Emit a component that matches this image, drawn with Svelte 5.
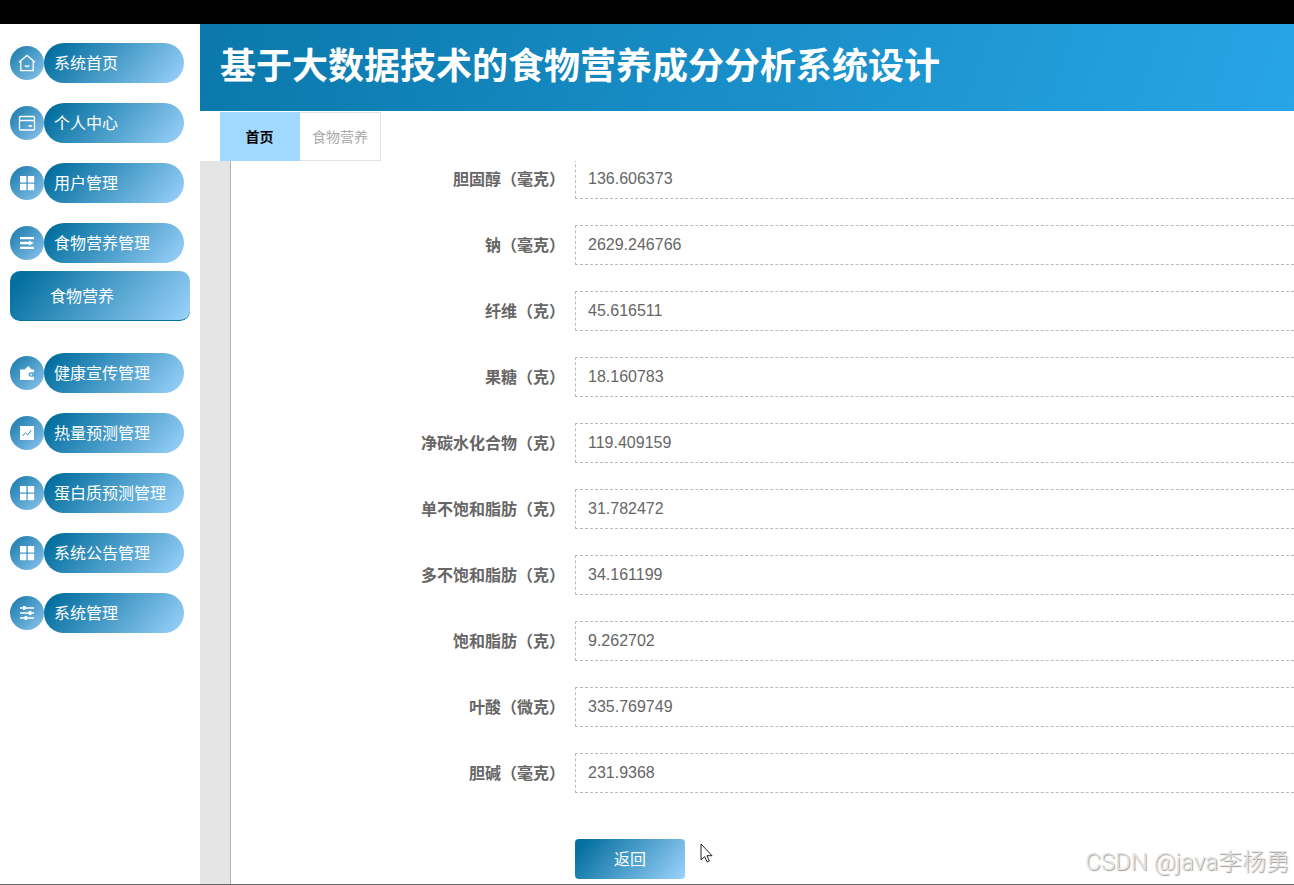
<script lang="ts">
    let openMenu = "食物营养管理";
    let activeTab = "首页";

    const menus = [
        { name: "系统首页", icon: "home" },
        { name: "个人中心", icon: "card" },
        { name: "用户管理", icon: "grid" },
        { name: "食物营养管理", icon: "indent", children: ["食物营养"] },
        { name: "健康宣传管理", icon: "wallet" },
        { name: "热量预测管理", icon: "chart" },
        { name: "蛋白质预测管理", icon: "grid" },
        { name: "系统公告管理", icon: "grid" },
        { name: "系统管理", icon: "sliders" },
    ];

    const tabs = ["首页", "食物营养"];

    const fields = [
        { id: "danguchun", label: "胆固醇（毫克）", value: "136.606373" },
        { id: "na", label: "钠（毫克）", value: "2629.246766" },
        { id: "xianwei", label: "纤维（克）", value: "45.616511" },
        { id: "guotang", label: "果糖（克）", value: "18.160783" },
        { id: "jingtanshui", label: "净碳水化合物（克）", value: "119.409159" },
        { id: "danbubaohe", label: "单不饱和脂肪（克）", value: "31.782472" },
        { id: "duobubaohe", label: "多不饱和脂肪（克）", value: "34.161199" },
        { id: "baohe", label: "饱和脂肪（克）", value: "9.262702" },
        { id: "yesuan", label: "叶酸（微克）", value: "335.769749" },
        { id: "danjian", label: "胆碱（毫克）", value: "231.9368" },
    ];

    function toggle(name: string) {
        openMenu = name;
    }
</script>

<div class="page">
    <div class="topbar"></div>
    <div class="body">
        <nav class="sidebar">
            <ul>
                {#each menus as item}
                    <li>
                        <button class="menu" type="button" on:click={() => toggle(item.name)}>
                            <span class="circle">
                                <svg viewBox="0 0 18 18" width="18" height="18" aria-hidden="true">
                                    {#if item.icon === "home"}
                                        <path class="line" d="M1 8.2 9 1.4l8 6.8M2.8 7v9.6h12.4V7M6.8 11.6q2.2 2 4.4 0" />
                                    {:else if item.icon === "card"}
                                        <rect class="line" x="1.5" y="2.5" width="15" height="13.5" rx="1" />
                                        <path class="line" d="M1.5 6.5h15M10.5 12h3.5" />
                                    {:else if item.icon === "grid"}
                                        <rect x="2" y="2" width="6.4" height="6.4" rx="0.6" />
                                        <rect x="9.8" y="2" width="6.4" height="6.4" rx="0.6" />
                                        <rect x="2" y="9.8" width="6.4" height="6.4" rx="0.6" />
                                        <rect x="9.8" y="9.8" width="6.4" height="6.4" rx="0.6" />
                                    {:else if item.icon === "indent"}
                                        <path d="M2 3h14v2.2H2zM2 7.8h9V6.4L15.8 9 11 11.6v-1.4H2zM2 12.8h14V15H2z" />
                                    {:else if item.icon === "wallet"}
                                        <path d="M2 5.5h4.5L10.5 2l3 3.5H16v2.8h-3.3a2.2 2.2 0 0 0 0 4.4H16V16H2z" />
                                        <circle cx="13.2" cy="10.5" r="1" />
                                    {:else if item.icon === "chart"}
                                        <path d="M2 2h14v14H2z" />
                                        <path class="trend" d="M4.5 12 7.4 8.8l2.4 2 3.6-4.6" />
                                    {:else}
                                        <path d="M2 3.2h14v1.6H2zM2 8.2h14v1.6H2zM2 13.2h14v1.6H2z" />
                                        <path d="M5 2h2.6v4H5zM10.8 7h2.6v4h-2.6zM6.5 12h2.6v4H6.5z" />
                                    {/if}
                                </svg>
                            </span>
                            <span class="pill">{item.name}</span>
                        </button>
                        {#if item.children && openMenu === item.name}
                            <div class="submenu">
                                {#each item.children as child}
                                    <a href="#{child}">{child}</a>
                                {/each}
                            </div>
                        {/if}
                    </li>
                {/each}
            </ul>
        </nav>

        <div class="main">
            <header>
                <h1>基于大数据技术的食物营养成分分析系统设计</h1>
            </header>
            <div class="tabs">
                {#each tabs as tab}
                    <button type="button" class="tab" class:active={activeTab === tab} on:click={() => (activeTab = tab)}>{tab}</button>
                {/each}
            </div>
            <div class="view">
                <form>
                    {#each fields as field}
                        <div class="row">
                            <label for={field.id}>{field.label}</label>
                            <input id={field.id} type="text" readonly value={field.value} />
                        </div>
                    {/each}
                    <div class="actions">
                        <button type="button" class="back">返回</button>
                    </div>
                </form>
            </div>
        </div>
    </div>

    <svg class="pointer" viewBox="0 0 13 20" width="13" height="20" aria-hidden="true">
        <path d="M1 1v16l3.6-3.4 2.6 5.4 2.2-1-2.5-5.3H12z" />
    </svg>
    <div class="watermark">CSDN @java李杨勇</div>
</div>

<style>
:global(body) {
    margin: 0;
    background: #fff;
}

.page {
    position: relative;
    display: flex;
    flex-direction: column;
    box-sizing: border-box;
    min-height: 100vh;
    border-bottom: 1px solid #666;
    overflow: hidden;
    font-family: "Liberation Sans", "Noto Sans CJK SC", sans-serif;
    font-size: 16px;
}

.page button {
    font-family: inherit;
    border: 0;
    cursor: pointer;
}

.topbar {
    height: 24px;
    background: #000;
}

.body {
    display: flex;
    flex: 1;
}

.sidebar {
    flex: 0 0 200px;
}

.sidebar ul {
    display: flex;
    flex-direction: column;
    gap: 20px;
    list-style: none;
    margin: 0;
    padding: 19px 10px;
}

.menu {
    display: flex;
    align-items: center;
    width: 174px;
    padding: 0;
    background: none;
    color: #fff;
    font-size: 16px;
    text-align: left;
}

.pill,
.submenu a,
.back {
    background: linear-gradient(130deg, #0570a0 8%, #98d0f9 98%);
}

.circle {
    display: flex;
    align-items: center;
    justify-content: center;
    width: 34px;
    height: 34px;
    border-radius: 50%;
    background: linear-gradient(135deg, #1577a8, #8cc6ef);
}

.circle svg {
    fill: #fff;
}

.circle .line {
    fill: none;
    stroke: #fff;
    stroke-width: 1.3;
}

.circle .trend {
    fill: none;
    stroke: #3c8fbf;
    stroke-width: 1;
}

.pill {
    flex: 1;
    padding: 2px 0 0 10px;
    border-radius: 20px;
    line-height: 38px;
}

.submenu {
    padding: 8px 0 12px;
}

.submenu a {
    display: block;
    box-sizing: border-box;
    height: 50px;
    padding-left: 40px;
    border-bottom: 1px solid #0570a0;
    border-radius: 10px;
    color: #fff;
    line-height: 52px;
    text-decoration: none;
}

.main {
    display: flex;
    flex-direction: column;
    flex: 1;
    min-width: 0;
}

header {
    box-sizing: border-box;
    height: 87px;
    padding: 16px 20px;
    background: linear-gradient(110deg, #0a78aa, #28a5e6);
}

h1 {
    margin: 0;
    color: #fff;
    font-size: 36px;
    font-weight: 700;
    line-height: 54px;
    white-space: nowrap;
}

.tabs {
    display: flex;
    padding: 1px 20px 0;
}

.tab {
    box-sizing: border-box;
    min-width: 80px;
    height: 49px;
    padding: 0 12px 2px;
    background: #fff;
    color: #aaa;
    font-size: 14px;
}

.page .tab {
    border: 1px solid #e3e3e3;
    border-left: 0;
}

.page .tab.active {
    border-color: #a0d8ff;
    background: #a0d8ff;
    color: #000;
    font-weight: 700;
}

.view {
    display: flex;
    flex: 1;
    padding-left: 30px;
    background: #e5e5e6;
    overflow: hidden;
}

/* the form is scrolled slightly under the tab bar */
form {
    flex: 1;
    min-width: 0;
    margin-top: -2px;
    padding-bottom: 5px;
    border-left: 1px solid #b0b0b2;
    background: #fff;
}

.row {
    display: flex;
    gap: 10px;
    margin-bottom: 26px;
}

label {
    flex: 0 0 334px;
    height: 40px;
    color: #666;
    font-weight: 700;
    line-height: 42px;
    text-align: right;
}

input {
    flex: 1;
    box-sizing: border-box;
    min-width: 0;
    height: 40px;
    padding: 0 12px;
    border: 1px dashed #bbb;
    border-right: 0;
    background: #fff;
    color: #666;
    font-family: "Liberation Sans", Arial, sans-serif;
    font-size: 16px;
    outline: none;
}

.actions {
    padding: 20px 0 0 344px;
}

.back {
    display: block;
    width: 110px;
    height: 40px;
    padding: 0 0 2px;
    border-radius: 4px;
    color: #fff;
    font-size: 16px;
}

.pointer {
    position: absolute;
    left: 700px;
    top: 843px;
    fill: #fff;
    stroke: #222;
}

.watermark {
    position: absolute;
    right: 4px;
    bottom: 4px;
    color: #e4e4e4;
    font-family: Roboto, "Noto Sans CJK SC", sans-serif;
    font-size: 24px;
    font-weight: 300;
    line-height: 36px;
    text-shadow: 1px 1px 1px #999;
}
</style>
